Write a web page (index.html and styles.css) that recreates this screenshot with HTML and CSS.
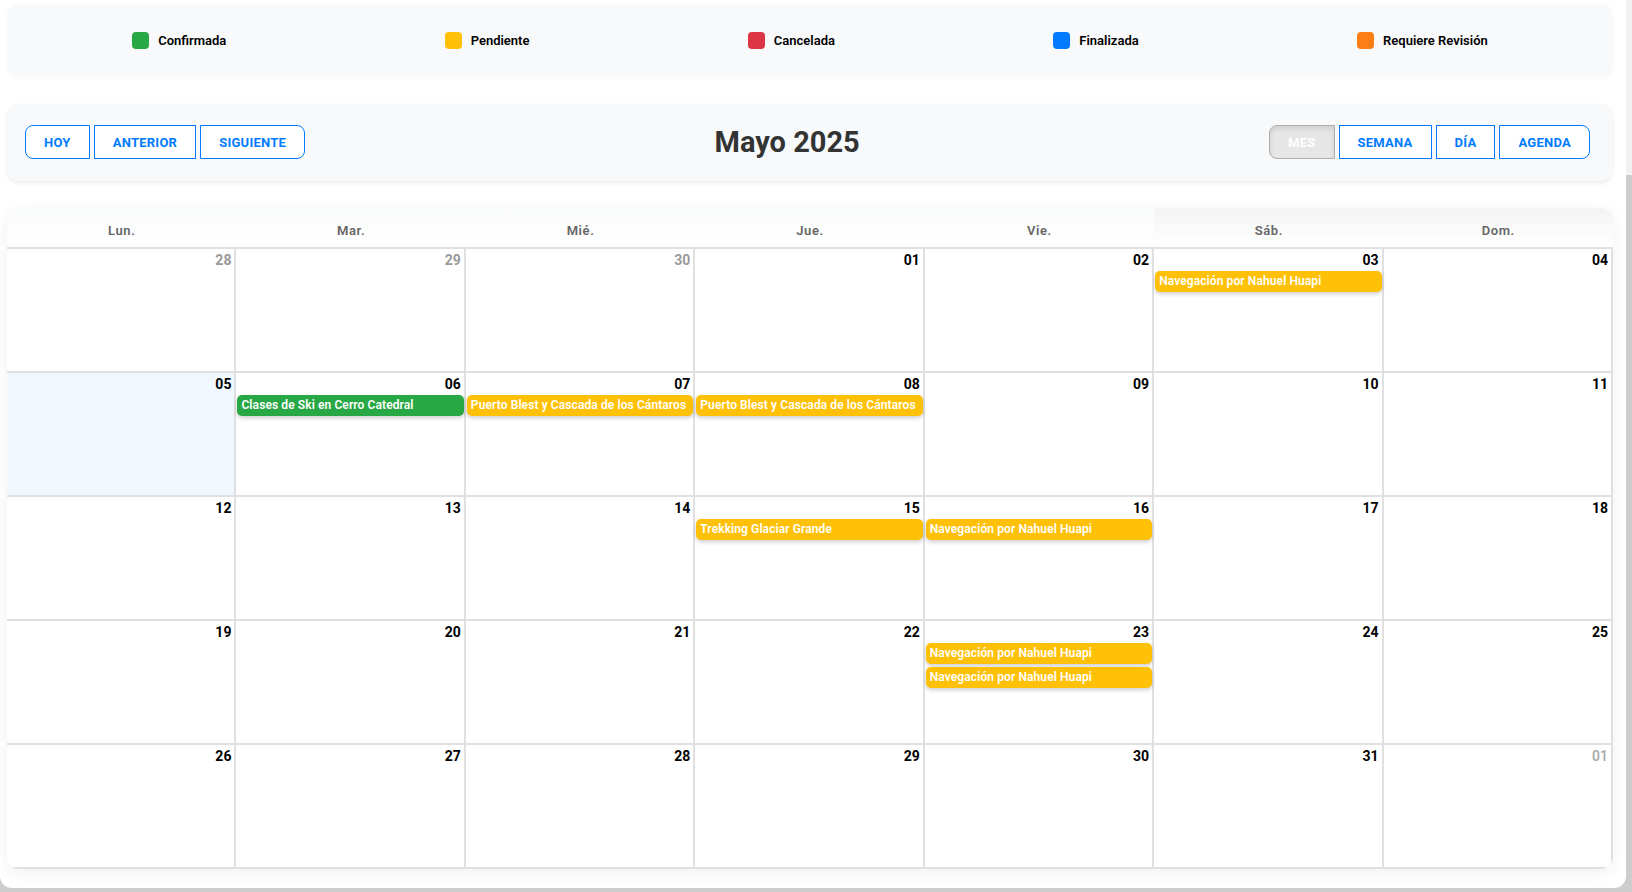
FILE: index.html
```html
<!DOCTYPE html>
<html lang="es">
<head>
    <meta charset="UTF-8">
    <meta name="viewport" content="width=device-width, initial-scale=1.0">
    <title>Calendario de Reservas</title>
    <link rel="stylesheet" href="styles.css">
</head>
<body>

<div class="page">
    <div class="legend">
        <div class="legend-item"><span class="swatch confirmed"></span>Confirmada</div>
        <div class="legend-item"><span class="swatch pending"></span>Pendiente</div>
        <div class="legend-item"><span class="swatch cancelled"></span>Cancelada</div>
        <div class="legend-item"><span class="swatch finished"></span>Finalizada</div>
        <div class="legend-item"><span class="swatch review"></span>Requiere Revisión</div>
    </div>

    <div class="toolbar">
        <div class="btn-group">
            <button>Hoy</button>
            <button>Anterior</button>
            <button>Siguiente</button>
        </div>
        <h1 class="title">Mayo 2025</h1>
        <div class="btn-group">
            <button class="active">Mes</button>
            <button>Semana</button>
            <button>Día</button>
            <button>Agenda</button>
        </div>
    </div>

    <div class="calendar">
        <div class="weekdays">
            <div class="weekday">Lun.</div>
            <div class="weekday">Mar.</div>
            <div class="weekday">Mié.</div>
            <div class="weekday">Jue.</div>
            <div class="weekday">Vie.</div>
            <div class="weekday weekend">Sáb.</div>
            <div class="weekday weekend">Dom.</div>
        </div>

        <div class="month">
            <!-- semana 1 -->
            <div class="cell"><div class="date off">28</div></div>
            <div class="cell"><div class="date off">29</div></div>
            <div class="cell"><div class="date off">30</div></div>
            <div class="cell"><div class="date">01</div></div>
            <div class="cell"><div class="date">02</div></div>
            <div class="cell">
                <div class="date">03</div>
                <div class="event pending">Navegación por Nahuel Huapi</div>
            </div>
            <div class="cell"><div class="date">04</div></div>

            <!-- semana 2 -->
            <div class="cell today"><div class="date">05</div></div>
            <div class="cell">
                <div class="date">06</div>
                <div class="event confirmed">Clases de Ski en Cerro Catedral</div>
            </div>
            <div class="cell">
                <div class="date">07</div>
                <div class="event pending">Puerto Blest y Cascada de los Cántaros</div>
            </div>
            <div class="cell">
                <div class="date">08</div>
                <div class="event pending">Puerto Blest y Cascada de los Cántaros</div>
            </div>
            <div class="cell"><div class="date">09</div></div>
            <div class="cell"><div class="date">10</div></div>
            <div class="cell"><div class="date">11</div></div>

            <!-- semana 3 -->
            <div class="cell"><div class="date">12</div></div>
            <div class="cell"><div class="date">13</div></div>
            <div class="cell"><div class="date">14</div></div>
            <div class="cell">
                <div class="date">15</div>
                <div class="event pending">Trekking Glaciar Grande</div>
            </div>
            <div class="cell">
                <div class="date">16</div>
                <div class="event pending">Navegación por Nahuel Huapi</div>
            </div>
            <div class="cell"><div class="date">17</div></div>
            <div class="cell"><div class="date">18</div></div>

            <!-- semana 4 -->
            <div class="cell"><div class="date">19</div></div>
            <div class="cell"><div class="date">20</div></div>
            <div class="cell"><div class="date">21</div></div>
            <div class="cell"><div class="date">22</div></div>
            <div class="cell">
                <div class="date">23</div>
                <div class="event pending">Navegación por Nahuel Huapi</div>
                <div class="event pending">Navegación por Nahuel Huapi</div>
            </div>
            <div class="cell"><div class="date">24</div></div>
            <div class="cell"><div class="date">25</div></div>

            <!-- semana 5 -->
            <div class="cell"><div class="date">26</div></div>
            <div class="cell"><div class="date">27</div></div>
            <div class="cell"><div class="date">28</div></div>
            <div class="cell"><div class="date">29</div></div>
            <div class="cell"><div class="date">30</div></div>
            <div class="cell"><div class="date">31</div></div>
            <div class="cell"><div class="date off light">01</div></div>
        </div>
    </div>
</div>

</body>
</html>
```

FILE: styles.css
```css
html {
    background:
        linear-gradient(#f1f1f1, #f1f1f1) right top / 6px 175px no-repeat,
        #cdcdcd;
}
body {
    font-family: Roboto, 'Liberation Sans', sans-serif;
    margin: 0;
    padding: 0;
    color: #000;
}
.page {
    margin-right: 6px;
    height: 888px;
    box-sizing: border-box;
    padding: 4px 13px 20px 7px;
    background-color: #fff;
    border-radius: 0 0 12px 12px;
}

/* leyenda de estados */
.legend {
    display: flex;
    justify-content: space-around;
    align-items: center;
    padding: 28px 16px;
    background-color: #f8f9fa;
    border-radius: 12px;
    box-shadow: 0 1px 6px rgba(0, 0, 0, 0.03);
}
.legend-item {
    display: flex;
    align-items: center;
    font-size: 13px;
    line-height: 17px;
    font-weight: 600;
}
.swatch {
    width: 17px;
    height: 17px;
    border-radius: 4px;
    margin-right: 9px;
}
.confirmed { background-color: #28a745; }
.pending { background-color: #ffc107; }
.cancelled { background-color: #dc3545; }
.finished { background-color: #007bff; }
.review { background-color: #fd7e14; }

/* barra de navegacion */
.toolbar {
    display: flex;
    align-items: center;
    margin-top: 27px;
    padding: 21px 23px 22px 18px;
    background-color: #f8f9fa;
    border-radius: 12px;
    box-shadow: 0 2px 4px rgba(0, 0, 0, 0.08);
}
.title {
    flex: 1;
    margin: 0;
    text-align: center;
    font-size: 29px;
    font-weight: 700;
    color: #333;
}
.btn-group {
    display: flex;
    gap: 4px;
}
.btn-group button {
    height: 34px;
    padding: 0 18px;
    font-family: inherit;
    font-size: 13px;
    font-weight: 700;
    letter-spacing: 0.25px;
    text-transform: uppercase;
    color: #007bff;
    background-color: #fff;
    border: 1px solid #007bff;
    border-radius: 0;
    cursor: pointer;
}
.btn-group button:first-child {
    border-radius: 8px 0 0 8px;
}
.btn-group button:last-child {
    border-radius: 0 8px 8px 0;
}
.btn-group button.active {
    color: #fff;
    background-color: #e6e6e6;
    border-color: #adadad;
    box-shadow: inset 0 3px 5px rgba(0, 0, 0, 0.1);
}

/* calendario */
.calendar {
    margin-top: 27px;
    background-color: #fff;
    border-radius: 12px;
    overflow: hidden;
    box-shadow: 0 4px 16px rgba(0, 0, 0, 0.06);
}
.weekdays {
    display: grid;
    grid-template-columns: repeat(7, 1fr);
    border-bottom: 2px solid #e0e0e0;
}
.weekday {
    padding: 15px 0 8px;
    line-height: 16px;
    text-align: center;
    font-size: 13px;
    font-weight: 600;
    letter-spacing: 0.6px;
    color: #666;
    background: linear-gradient(#fafbfc, #fff);
}
.weekday.weekend {
    background: linear-gradient(#f3f4f5, #fff);
}
.month {
    display: grid;
    grid-template-columns: repeat(7, minmax(0, 1fr));
    grid-auto-rows: 124px;
}
.cell {
    box-sizing: border-box;
    padding: 2px 0 0 1px;
    border-right: 2px solid #e0e0e0;
    border-bottom: 2px solid #e0e0e0;
}
.cell.today {
    background-color: #f0f7ff;
}
.date {
    padding-right: 3px;
    text-align: right;
    font-size: 14px;
    line-height: 18px;
    font-weight: 700;
}
.date.off {
    color: #999;
}
.date.light {
    font-weight: 500;
    color: #a6a6a6;
}
.event {
    margin-top: 2px;
    height: 21px;
    padding: 0 4px;
    line-height: 21px;
    font-size: 12px;
    font-weight: 600;
    letter-spacing: 0.1px;
    color: #fff;
    border-radius: 5px;
    white-space: nowrap;
    overflow: hidden;
    box-shadow: 0 2px 4px rgba(0, 0, 0, 0.2);
}
.event + .event {
    margin-top: 3px;
}
```
